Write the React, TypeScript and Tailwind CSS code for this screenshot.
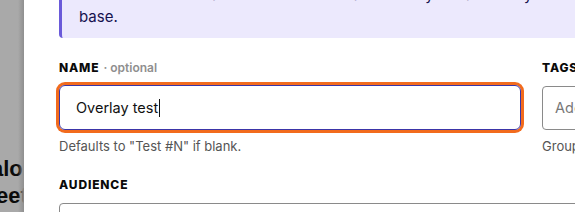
import React from "react";

export default function App() {
  return (
    <div className="flex h-[212px] w-[575px] overflow-hidden bg-white" style={{ fontFamily: "Inter, 'Noto Sans', sans-serif" }}>
      {/* dimmed page behind the modal */}
      <div className="relative w-[24px] shrink-0 overflow-hidden bg-[#a9a9a9]" style={{ fontFamily: "'Liberation Sans', Arial, sans-serif" }}>
        <div className="mt-[155px] flex flex-col text-[22px] font-bold leading-[27px] text-[#0b0b0b] whitespace-nowrap">
          <span className="ml-[-9px]">alo</span>
          <span className="ml-[-4px]">eet</span>
        </div>
        <div className="absolute inset-y-0 right-0 w-[6px] bg-gradient-to-r from-transparent to-[#8f8f8f]" />
      </div>

      {/* modal */}
      <div className="flex-1 min-w-0 bg-white pl-[35px]">
        <div className="mt-[-28px] mr-[-40px] rounded-bl-[4px] border-l-[3px] border-[#6a5ad9] bg-[#ece9fd] pl-[17px] pt-3 pb-[10px] text-[15px] leading-[22px] text-[#16124f] whitespace-nowrap">
          <div>These fields don't affect the test mechanics. They're saved so your team</div>
          <div>base.</div>
        </div>

        <div className="mt-[22px] flex gap-[21px]">
          <div className="w-[462px] shrink-0">
            <div className="flex items-baseline text-[12px] leading-4">
              <span className="font-extrabold tracking-[0.07em] text-[#0a0a0a]">NAME</span>
              <span className="ml-[4px] font-semibold text-[#8f8f8f]">· optional</span>
            </div>
            <div className="mt-[9px] flex h-[45px] items-center rounded-[6px] border border-[#3b35a8] pl-4 text-[14.5px] text-[#111] shadow-[0_0_0_3px_#f26b1d]">
              <span>Overlay test</span>
              <span className="ml-[1px] inline-block h-[18px] w-px bg-[#111]" />
            </div>
            <div className="mt-[8px] text-[13px] leading-4 text-[#555]">Defaults to "Test #N" if blank.</div>
          </div>
          <div className="w-[80px] shrink-0">
            <div className="text-[12px] font-extrabold leading-4 tracking-[0.07em] text-[#0a0a0a]">TAGS</div>
            <div className="mt-[10px] flex h-[44px] items-center rounded-[4px] border border-[#8a8a8a] pl-3 text-[14.5px] text-[#777] whitespace-nowrap">
              Add tags
            </div>
            <div className="mt-[8px] text-[13px] leading-4 text-[#555] whitespace-nowrap">Group tests</div>
          </div>
        </div>

        <div className="mt-[23px] text-[12px] font-extrabold leading-4 tracking-[0.07em] text-[#0a0a0a]">AUDIENCE</div>
        <div className="mt-[10px] mr-[-20px] h-[40px] rounded-[4px] border border-[#8a8a8a]" />
      </div>
    </div>
  );
}
